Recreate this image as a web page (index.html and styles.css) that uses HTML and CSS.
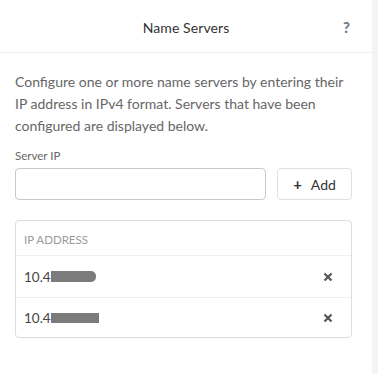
FILE: index.html
```html
<!DOCTYPE html>
<html>
<head>
<meta charset="utf-8">
<link rel="stylesheet" href="styles.css">
</head>
<body>
<div class="frame">
  <div class="panel">
    <header class="head">
      <span class="title">Name Servers</span>
      <span class="help">?</span>
    </header>
    <div class="body">
      <p class="desc">Configure one or more name servers by entering their IP address in IPv4 format. Servers that have been configured are displayed below.</p>
      <label class="label">Server IP</label>
      <div class="form-row">
        <input class="input" type="text">
        <button class="add"><span class="plus">+</span>Add</button>
      </div>
      <div class="table">
        <div class="th">IP ADDRESS</div>
        <div class="tr"><span class="ip">10.4<span class="redact r1"></span></span><svg class="del" viewBox="0 0 10 10"><path d="M1.5 1.5 L8.5 8.5 M8.5 1.5 L1.5 8.5"/></svg></div>
        <div class="tr"><span class="ip">10.4<span class="redact r2"></span></span><svg class="del" viewBox="0 0 10 10"><path d="M1.5 1.5 L8.5 8.5 M8.5 1.5 L1.5 8.5"/></svg></div>
      </div>
    </div>
  </div>
  <div class="strip"></div>
</div>
</body>
</html>
```
FILE: styles.css
```css
* { box-sizing: border-box; }
html, body { margin: 0; padding: 0; background: #fff; }
body { font-family: "Lato", "Open Sans", sans-serif; color: #333; }
.frame { display: flex; width: 378px; height: 374px; }
.panel { width: 372px; }
.strip { width: 6px; background: #f3f4f5; }
.head {
  height: 53px;
  border-bottom: 1px solid #eef0f2;
  display: flex;
  align-items: center;
  justify-content: center;
  position: relative;
}
.title { font-size: 14px; color: #333; margin-top: 2px; letter-spacing: 0.1px; }
.help {
  position: absolute;
  right: 22px;
  top: 18px;
  font-size: 15px;
  font-weight: 900;
  color: #6f7c8a;
}
.body { padding: 18px 20px 0 15px; }
.desc {
  margin: 0;
  font-size: 14px;
  line-height: 22px;
  color: #666;
}
.label {
  display: block;
  margin-top: 12px;
  font-size: 11.5px;
  line-height: 14px;
  color: #666;
}
.form-row { display: flex; gap: 11px; margin-top: 5px; }
.input {
  width: 251px;
  height: 32px;
  border: 1px solid #c8c8c8;
  border-radius: 4px;
  margin: 0;
  padding: 0 8px;
  background: #fff;
}
.add {
  width: 75px;
  height: 32px;
  border: 1px solid #e0e0e0;
  border-radius: 4px;
  background: #fff;
  font-family: inherit;
  font-size: 14px;
  color: #333;
  display: flex;
  align-items: center;
  justify-content: center;
  padding: 0;
}
.plus { font-weight: 700; font-size: 15px; margin-right: 9px; margin-top: -1px; }
.table {
  margin-top: 20px;
  border: 1px solid #dcdcdc;
  border-radius: 4px;
}
.th {
  height: 35px;
  padding: 12px 0 0 8px;
  font-size: 11.5px;
  color: #9a9a9a;
  border-bottom: 1px solid #f0f0f0;
}
.tr {
  height: 41px;
  display: flex;
  align-items: center;
  justify-content: space-between;
  padding: 0 18px 0 8px;
  font-size: 13.5px;
  color: #444;
}
.tr + .tr { border-top: 1px solid #f0f0f0; height: 40px; }
.ip { display: flex; align-items: center; }
.redact { display: inline-block; background: #7b7b7b; height: 11px; }
.r1 { width: 45px; border-radius: 0 5px 5px 0; }
.r2 { width: 48px; height: 10px; }
.del { width: 10px; height: 10px; stroke: #555; stroke-width: 2.2; fill: none; }
```
